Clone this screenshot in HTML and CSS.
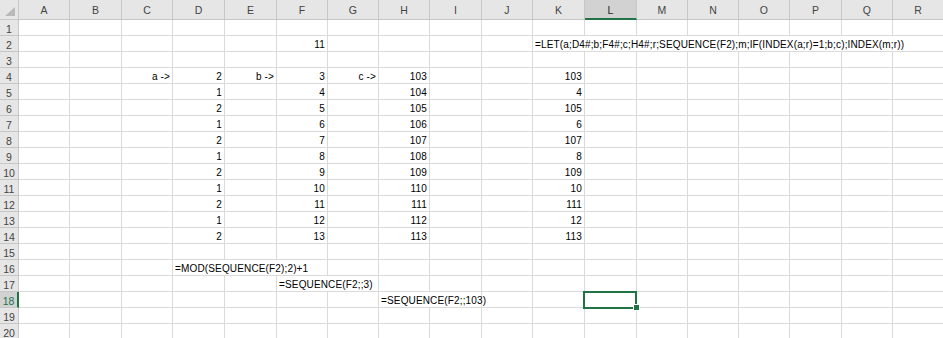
FILE: index.html
```html
<!DOCTYPE html>
<html lang="en">
<head>
    <meta charset="UTF-8">
    <title>Sheet1</title>
    <link rel="stylesheet" href="styles.css">
</head>
<body>
    <div class="sheet">
        <!-- column headers -->
        <div class="corner"><svg width="10" height="9" viewBox="0 0 10 9"><polygon points="10,0 10,9 0,9" fill="#b9b9b9"/></svg></div>
        <div class="ch">A</div><div class="ch">B</div><div class="ch">C</div><div class="ch">D</div><div class="ch">E</div><div class="ch">F</div><div class="ch">G</div><div class="ch">H</div><div class="ch">I</div><div class="ch">J</div><div class="ch">K</div><div class="ch sel">L</div><div class="ch">M</div><div class="ch">N</div><div class="ch">O</div><div class="ch">P</div><div class="ch">Q</div><div class="ch">R</div>

        <div class="rh">1</div><div></div><div></div><div></div><div></div><div></div><div></div><div></div><div></div><div></div><div></div><div></div><div></div><div></div><div></div><div></div><div></div><div></div><div></div>
        <div class="rh">2</div><div></div><div></div><div></div><div></div><div></div><div class="r">11</div><div></div><div></div><div></div><div></div><div class="s8">=LET(a;D4#;b;F4#;c;H4#;r;SEQUENCE(F2);m;IF(INDEX(a;r)=1;b;c);INDEX(m;r))</div>
        <div class="rh">3</div><div></div><div></div><div></div><div></div><div></div><div></div><div></div><div></div><div></div><div></div><div></div><div></div><div></div><div></div><div></div><div></div><div></div><div></div>
        <div class="rh">4</div><div></div><div></div><div class="r">a -&gt;</div><div class="r">2</div><div class="r">b -&gt;</div><div class="r">3</div><div class="r">c -&gt;</div><div class="r">103</div><div></div><div></div><div class="r">103</div><div></div><div></div><div></div><div></div><div></div><div></div><div></div>
        <div class="rh">5</div><div></div><div></div><div></div><div class="r">1</div><div></div><div class="r">4</div><div></div><div class="r">104</div><div></div><div></div><div class="r">4</div><div></div><div></div><div></div><div></div><div></div><div></div><div></div>
        <div class="rh">6</div><div></div><div></div><div></div><div class="r">2</div><div></div><div class="r">5</div><div></div><div class="r">105</div><div></div><div></div><div class="r">105</div><div></div><div></div><div></div><div></div><div></div><div></div><div></div>
        <div class="rh">7</div><div></div><div></div><div></div><div class="r">1</div><div></div><div class="r">6</div><div></div><div class="r">106</div><div></div><div></div><div class="r">6</div><div></div><div></div><div></div><div></div><div></div><div></div><div></div>
        <div class="rh">8</div><div></div><div></div><div></div><div class="r">2</div><div></div><div class="r">7</div><div></div><div class="r">107</div><div></div><div></div><div class="r">107</div><div></div><div></div><div></div><div></div><div></div><div></div><div></div>
        <div class="rh">9</div><div></div><div></div><div></div><div class="r">1</div><div></div><div class="r">8</div><div></div><div class="r">108</div><div></div><div></div><div class="r">8</div><div></div><div></div><div></div><div></div><div></div><div></div><div></div>
        <div class="rh">10</div><div></div><div></div><div></div><div class="r">2</div><div></div><div class="r">9</div><div></div><div class="r">109</div><div></div><div></div><div class="r">109</div><div></div><div></div><div></div><div></div><div></div><div></div><div></div>
        <div class="rh">11</div><div></div><div></div><div></div><div class="r">1</div><div></div><div class="r">10</div><div></div><div class="r">110</div><div></div><div></div><div class="r">10</div><div></div><div></div><div></div><div></div><div></div><div></div><div></div>
        <div class="rh">12</div><div></div><div></div><div></div><div class="r">2</div><div></div><div class="r">11</div><div></div><div class="r">111</div><div></div><div></div><div class="r">111</div><div></div><div></div><div></div><div></div><div></div><div></div><div></div>
        <div class="rh">13</div><div></div><div></div><div></div><div class="r">1</div><div></div><div class="r">12</div><div></div><div class="r">112</div><div></div><div></div><div class="r">12</div><div></div><div></div><div></div><div></div><div></div><div></div><div></div>
        <div class="rh">14</div><div></div><div></div><div></div><div class="r">2</div><div></div><div class="r">13</div><div></div><div class="r">113</div><div></div><div></div><div class="r">113</div><div></div><div></div><div></div><div></div><div></div><div></div><div></div>
        <div class="rh">15</div><div></div><div></div><div></div><div></div><div></div><div></div><div></div><div></div><div></div><div></div><div></div><div></div><div></div><div></div><div></div><div></div><div></div><div></div>
        <!-- formulas overflow into the next cells -->
        <div class="rh">16</div>
        <div></div><div></div><div></div>
        <div class="s3">=MOD(SEQUENCE(F2);2)+1</div>
        <div></div><div></div><div></div><div></div><div></div><div></div><div></div><div></div><div></div><div></div><div></div><div></div>
        <div class="rh">17</div>
        <div></div><div></div><div></div><div></div><div></div>
        <div class="s2">=SEQUENCE(F2;;3)</div>
        <div></div><div></div><div></div><div></div><div></div><div></div><div></div><div></div><div></div><div></div><div></div>
        <div class="rh active">18</div>
        <div></div><div></div><div></div><div></div><div></div><div></div><div></div>
        <div class="s2">=SEQUENCE(F2;;103)</div>
        <div></div><div></div>
        <div class="cur"></div>
        <div></div><div></div><div></div><div></div><div></div><div></div>
        <div class="rh">19</div><div></div><div></div><div></div><div></div><div></div><div></div><div></div><div></div><div></div><div></div><div></div><div></div><div></div><div></div><div></div><div></div><div></div><div></div>
        <div class="rh">20</div><div></div><div></div><div></div><div></div><div></div><div></div><div></div><div></div><div></div><div></div><div></div><div></div><div></div><div></div><div></div><div></div><div></div><div></div>
    </div>
</body>
</html>
```

FILE: styles.css
```css
body {
    margin: 0;
    background: #fff;
    overflow: hidden;
    font-family: "Liberation Sans", Arial, sans-serif;
}
.sheet {
    display: grid;
    grid-template-columns: 19px 51px 52px 51px 52px 52px 51px 51px 51px 52px 51px 52px 52px 51px 51px 51px 52px 51px 51px;
    grid-template-rows: 20px;
    grid-auto-rows: 16px;
    width: 943px;
    font-size: 10px;
    letter-spacing: 0.15px;
    color: #000;
}
.sheet > div {
    box-sizing: border-box;
    border-right: 1px solid #dadada;
    border-bottom: 1px solid #dadada;
    padding: 1px 2px 0;
    line-height: 16px;
    white-space: nowrap;
}
.sheet > .r {
    text-align: right;
}
.sheet > .s2 { grid-column: span 2; }
.sheet > .s3 { grid-column: span 3; }
.sheet > .s8 { grid-column: span 8; }

.sheet > .corner {
    background: #e6e6e6;
    border-right-color: #c6c6c6;
    border-bottom-color: #c6c6c6;
    display: flex;
    align-items: flex-end;
    justify-content: flex-end;
    padding: 0 3px 3px 0;
}
.sheet > .ch {
    background: #e6e6e6;
    border-right-color: #c6c6c6;
    border-bottom-color: #c6c6c6;
    color: #444;
    text-align: center;
    padding: 0;
    line-height: 20px;
    font-size: 10.5px;
}
.sheet > .ch.sel {
    background: #d2d2d2;
    border-bottom: 2px solid #217346;
    color: #262626;
}
.sheet > .rh {
    background: #e6e6e6;
    border-right-color: #c6c6c6;
    border-bottom-color: #c6c6c6;
    color: #444;
    text-align: center;
    padding: 1px 0 0;
    font-size: 10.5px;
    letter-spacing: 0;
}
.sheet > .rh.active {
    background: #d2d2d2;
    border-right: 2px solid #217346;
    color: #217346;
}
.sheet > .cur {
    position: relative;
}
.cur::after {
    content: "";
    position: absolute;
    left: -2px;
    top: -1px;
    right: -1px;
    bottom: -2px;
    border: 2px solid #217346;
}
.cur::before {
    content: "";
    position: absolute;
    right: -4px;
    bottom: -4px;
    width: 5px;
    height: 5px;
    background: #217346;
    border: 1px solid #fff;
    z-index: 1;
}
```
